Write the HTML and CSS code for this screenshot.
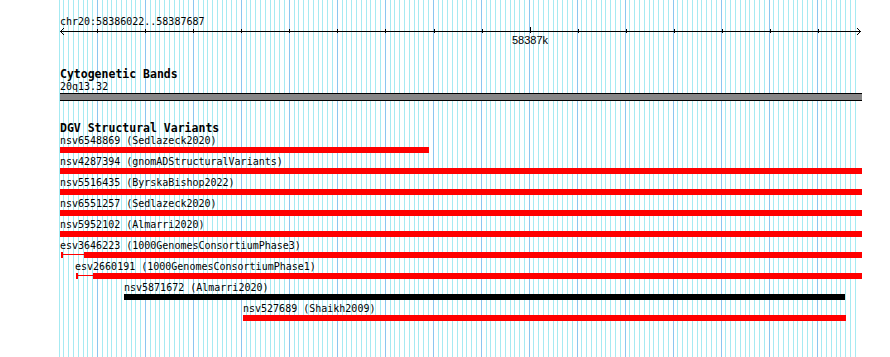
FILE: index.html
```html
<!DOCTYPE html>
<html lang="en">
<head>
    <meta charset="UTF-8">
    <meta name="viewport" content="width=device-width, initial-scale=1.0">
    <title>chr20:58386022..58387687</title>
    <link rel="stylesheet" href="styles.css">
</head>
<body>
    <div class="view">
        <!-- vertical gridlines, filled in by script.js -->
        <div id="gridlines" class="gridlines"></div>

        <div class="ruler">
            <div class="ruler-label">chr20:58386022..58387687</div>
            <svg class="ruler-axis" width="890" height="20" viewBox="0 0 890 20">
                <line class="axis" x1="60" y1="4.5" x2="861" y2="4.5"/>
                <polyline class="axis" points="64,1 60.5,4.5 64,8"/>
                <polyline class="axis" points="857,1 860.5,4.5 857,8"/>
                <g class="ticks">
                    <line x1="97.5" y1="2" x2="97.5" y2="6"/>
                    <line x1="145.5" y1="2" x2="145.5" y2="6"/>
                    <line x1="193.5" y1="2" x2="193.5" y2="6"/>
                    <line x1="241.5" y1="2" x2="241.5" y2="6"/>
                    <line x1="289.5" y1="2" x2="289.5" y2="6"/>
                    <line x1="337.5" y1="2" x2="337.5" y2="6"/>
                    <line x1="385.5" y1="2" x2="385.5" y2="6"/>
                    <line x1="434.5" y1="2" x2="434.5" y2="6"/>
                    <line x1="482.5" y1="2" x2="482.5" y2="6"/>
                    <line x1="530.5" y1="0" x2="530.5" y2="6"/>
                    <line x1="578.5" y1="2" x2="578.5" y2="6"/>
                    <line x1="626.5" y1="2" x2="626.5" y2="6"/>
                    <line x1="674.5" y1="2" x2="674.5" y2="6"/>
                    <line x1="722.5" y1="2" x2="722.5" y2="6"/>
                    <line x1="770.5" y1="2" x2="770.5" y2="6"/>
                    <line x1="818.5" y1="2" x2="818.5" y2="6"/>
                </g>
                <text class="tick-label" x="530" y="17" text-anchor="middle">58387k</text>
            </svg>
        </div>

        <div class="track cytobands">
            <div class="track-label">Cytogenetic Bands</div>
            <div class="feature-label">20q13.32</div>
            <div class="band"></div>
        </div>

        <div class="track variants">
            <div class="track-label">DGV Structural Variants</div>

            <div class="feature" style="margin-left: 60px;">
                <div class="feature-label">nsv6548869 (Sedlazeck2020)</div>
                <div class="bar" style="width: 369px;"></div>
            </div>
            <div class="feature" style="margin-left: 60px;">
                <div class="feature-label">nsv4287394 (gnomADStructuralVariants)</div>
                <div class="bar" style="width: 802px;"></div>
            </div>
            <div class="feature" style="margin-left: 60px;">
                <div class="feature-label">nsv5516435 (ByrskaBishop2022)</div>
                <div class="bar" style="width: 802px;"></div>
            </div>
            <div class="feature" style="margin-left: 60px;">
                <div class="feature-label">nsv6551257 (Sedlazeck2020)</div>
                <div class="bar" style="width: 802px;"></div>
            </div>
            <div class="feature" style="margin-left: 60px;">
                <div class="feature-label">nsv5952102 (Almarri2020)</div>
                <div class="bar" style="width: 802px;"></div>
            </div>
            <div class="feature" style="margin-left: 60px;">
                <div class="feature-label">esv3646223 (1000GenomesConsortiumPhase3)</div>
                <div class="split">
                    <div class="cap"></div>
                    <div class="thin" style="width: 21px;"></div>
                    <div class="bar" style="width: 778px;"></div>
                </div>
            </div>
            <div class="feature" style="margin-left: 75px;">
                <div class="feature-label">esv2660191 (1000GenomesConsortiumPhase1)</div>
                <div class="split">
                    <div class="cap"></div>
                    <div class="thin" style="width: 15px;"></div>
                    <div class="bar" style="width: 769px;"></div>
                </div>
            </div>
            <div class="feature" style="margin-left: 124px;">
                <div class="feature-label">nsv5871672 (Almarri2020)</div>
                <div class="bar loss" style="width: 721px;"></div>
            </div>
            <div class="feature" style="margin-left: 243px;">
                <div class="feature-label">nsv527689 (Shaikh2009)</div>
                <div class="bar" style="width: 603px;"></div>
            </div>
        </div>
    </div>

    <script src="script.js"></script>
</body>
</html>
```

FILE: styles.css
```css
body {
    margin: 0;
    padding: 0;
    background-color: #fff;
    color: #000;
    font-family: "DejaVu Sans Mono", "Liberation Mono", monospace;
    font-size: 10px;
    overflow: hidden;
}
.view {
    position: relative;
    width: 890px;
    height: 357px;
    overflow: hidden;
}
.gridlines {
    position: absolute;
    top: 0;
    bottom: 0;
    left: 58.6px;
    display: grid;
    grid-template-columns: repeat(167, 4.807px);
}
.gridline {
    border-left: 1px solid #a6eaf2;
}
.gridline.major {
    border-left-color: #8cc6f0;
}
.ruler {
    position: relative;
    padding-top: 16px;
}
.ruler-label {
    padding-left: 60px;
    line-height: 11px;
    white-space: nowrap;
}
.ruler-axis {
    display: block;
}
.ruler-axis .axis,
.ruler-axis .ticks line {
    stroke: #000;
    stroke-width: 1;
    fill: none;
    shape-rendering: crispEdges;
}
.ruler-axis polyline.axis {
    shape-rendering: auto;
}
.tick-label {
    font-family: "Liberation Sans", Arial, sans-serif;
    font-size: 11px;
    fill: #000;
}
.track {
    position: relative;
}
.track-label {
    padding-left: 60px;
    font-size: 11.5px;
    font-weight: bold;
    line-height: 12px;
    white-space: nowrap;
}
.feature-label {
    line-height: 11px;
    white-space: nowrap;
}
.cytobands {
    margin-top: 21px;
}
.cytobands .feature-label {
    margin-top: 1px;
    padding-left: 60px;
}
.band {
    box-sizing: border-box;
    margin: 1px 0 0 60px;
    width: 802px;
    height: 8px;
    background-color: #878787;
    border-top: 1px solid #000;
    border-bottom: 1px solid #000;
}
.variants {
    margin-top: 21px;
}
.variants .track-label {
    margin-bottom: 1px;
}
.feature {
    margin-bottom: 3px;
}
.feature .bar {
    height: 6px;
    background-color: #f00;
}
.feature > .bar,
.split {
    margin-top: 1px;
}
.bar.loss {
    background-color: #000;
}
.split {
    display: flex;
    align-items: flex-start;
}
.split .cap {
    width: 2px;
    height: 6px;
    margin-left: 1px;
    background-color: #f00;
}
.split .thin {
    height: 1px;
    margin-top: 2px;
    background-color: #f00;
}
```

FILE: script.js
```js
// 10bp gridlines across the visible block, darker every 100bp
const gridlines = document.getElementById('gridlines');

for (let i = 0; i < 167; i++) {
    const line = document.createElement('div');
    line.classList.add('gridline');
    if (i % 10 === 8) line.classList.add('major');
    gridlines.appendChild(line);
}
```
